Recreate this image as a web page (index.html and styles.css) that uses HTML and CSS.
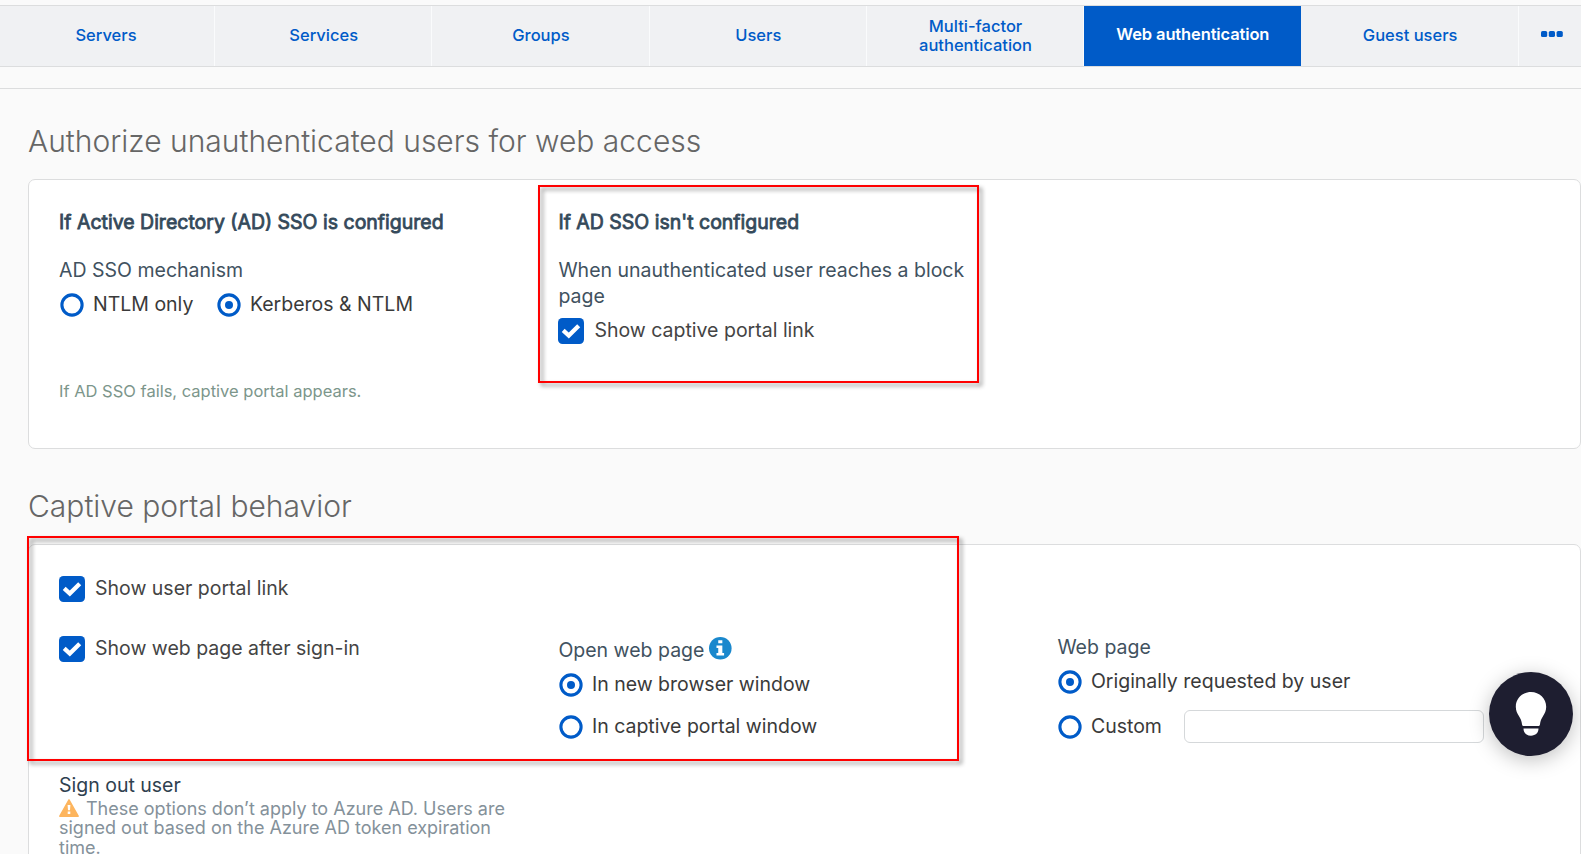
FILE: index.html
```html
<!DOCTYPE html>
<html lang="en">
<head>
<meta charset="utf-8">
<title>Web authentication</title>
<link rel="stylesheet" href="styles.css">
</head>
<body>
<svg class="sprite" aria-hidden="true">
  <symbol id="radio" viewBox="0 0 24 24"><circle cx="12" cy="12" r="10.1" fill="#fff" stroke="#005bc8" stroke-width="3.1"/></symbol>
  <symbol id="radio-on" viewBox="0 0 24 24"><circle cx="12" cy="12" r="10.1" fill="#fff" stroke="#005bc8" stroke-width="3.1"/><circle cx="12" cy="12" r="4" fill="#005bc8"/></symbol>
  <symbol id="check" viewBox="0 0 26 26"><rect width="26" height="26" rx="4.5" fill="#005bc8"/><path d="M5.2 12.4 10.8 17.5 20.7 7.7" fill="none" stroke="#fff" stroke-width="4.3"/></symbol>
</svg>
<nav class="tabs">
  <a class="tab">Servers</a>
  <a class="tab">Services</a>
  <a class="tab">Groups</a>
  <a class="tab">Users</a>
  <a class="tab">Multi-factor<br>authentication</a>
  <a class="tab tab-active">Web authentication</a>
  <a class="tab">Guest users</a>
  <a class="tab tab-more"><svg width="22" height="6" viewBox="0 0 22 6" fill="#005bc8"><rect width="6.2" height="6" rx="1.6"/><rect x="7.8" width="6.2" height="6" rx="1.6"/><rect x="15.6" width="6.2" height="6" rx="1.6"/></svg></a>
</nav>
<main class="content">
  <h1 class="title">Authorize unauthenticated users for web access</h1>
  <section class="card card-access">
    <div>
      <h2 class="subtitle">If Active Directory (AD) SSO is configured</h2>
      <p class="label">AD SSO mechanism</p>
      <div class="inline-options">
        <label class="option"><svg class="radio"><use href="#radio"/></svg>NTLM only</label>
        <label class="option"><svg class="radio"><use href="#radio-on"/></svg>Kerberos &amp; NTLM</label>
      </div>
      <p class="hint">If AD SSO fails, captive portal appears.</p>
    </div>
    <div>
      <h2 class="subtitle">If AD SSO isn't configured</h2>
      <p class="label label-wrap">When unauthenticated user reaches a block page</p>
      <label class="check-row"><svg class="check"><use href="#check"/></svg>Show captive portal link</label>
    </div>
  </section>
  <h1 class="title title-next">Captive portal behavior</h1>
  <section class="card card-portal">
    <label class="check-row"><svg class="check"><use href="#check"/></svg>Show user portal link</label>
    <div class="portal-row">
      <label class="check-row"><svg class="check"><use href="#check"/></svg>Show web page after sign-in</label>
      <div class="open-page">
        <p class="label">Open web page<svg class="info" viewBox="0 0 22 22"><circle cx="11" cy="11" r="11" fill="#1a88cd"/><path d="M9 3.2h4v3H9zM7.3 8.2H13v7.4h1.7V18H7.3v-2.4H9v-5H7.3z" fill="#fff"/></svg></p>
        <label class="option"><svg class="radio"><use href="#radio-on"/></svg>In new browser window</label>
        <label class="option"><svg class="radio"><use href="#radio"/></svg>In captive portal window</label>
      </div>
      <div class="web-page">
        <p class="label">Web page</p>
        <label class="option"><svg class="radio"><use href="#radio-on"/></svg>Originally requested by user</label>
        <div class="custom"><label class="option"><svg class="radio"><use href="#radio"/></svg>Custom</label><input class="field" type="text"></div>
      </div>
    </div>
    <div class="signout">
      <p class="label label-dark">Sign out user</p>
      <p class="note"><svg class="warn" viewBox="0 0 20 18"><path d="M10 .8 19.2 17.2H.8z" fill="#fdb55e" stroke="#fdb55e" stroke-width="1.4" stroke-linejoin="round"/><path d="M8.6 6h2.8l-.4 5.3H9zM8.7 12.6h2.6v2.5H8.7z" fill="#fff"/></svg>These options don’t apply to Azure AD. Users are<br>signed out based on the Azure AD token expiration<br>time.</p>
    </div>
  </section>
</main>
<div class="marker marker-access"></div>
<div class="marker marker-portal"></div>
<button class="help" aria-label="Help"><svg width="32" height="46" viewBox="0 0 32 46" fill="#fff"><path d="M16 1C7.500 1 .8 7.600.8 15.800c0 4.200 1.500 6.500 3.100 9.200 1.600 2.700 2.800 4.900 3.100 8.200.1 1.200.6 1.800 1.700 1.800h14.600c1.100 0 1.600-.6 1.700-1.800.3-3.300 1.500-5.500 3.100-8.200 1.600-2.700 3.100-5 3.100-9.200C31.200 7.600 24.500 1 16 1zM8.500 37.600h15c0 4.400-3 7.100-7.500 7.100s-7.500-2.700-7.500-7.100z"/></svg></button>
</body>
</html>
```
FILE: styles.css
```css
* { box-sizing: border-box; }
body { margin: 0; width: 1581px; height: 854px; overflow: hidden; position: relative; background: #fafafa; color: #3a3a3a; font: 400 19.5px/26px Inter, sans-serif; }
h1, h2, p { margin: 0; font-weight: 400; }
svg { flex: none; display: block; }
.sprite { position: absolute; width: 0; height: 0; }
.tabs { display: grid; grid-template-columns: 218px repeat(6, 217.3px) 1fr; height: 62px; margin: 5px 0 0 -3px; border: solid #dcddde; border-width: 1px 0; background: #f0f1f3; }
.tab { display: flex; align-items: center; justify-content: center; padding: 0 0 1px 1px; border-right: 1px solid #fafbfc; color: #005bc8; font-size: 16.5px; line-height: 19px; font-weight: 500; text-align: center; }
.tab-active { padding-bottom: 3px; background: #005bc8; color: #fff; font-weight: 600; letter-spacing: -.13px; border-color: #005bc8; }
.tab-more { border: 0; padding: 0 0 4px 4px; }
.content { height: 766px; overflow: hidden; margin-top: 21px; border-top: 1px solid #dcddde; padding: 34px 0 0 28px; }
.title { font-size: 30px; line-height: 36px; font-weight: 300; color: #666; margin-bottom: 20px; }
.title-next { margin-top: 39px; }
.card { width: 1553px; background: #fff; border: 1px solid #dcddde; border-radius: 7px; padding: 29px 0 0 30px; }
.card-access { height: 270px; display: grid; grid-template-columns: 499.4px 420px; }
.card-portal { height: 400px; padding-top: 30px; }
.subtitle { font-size: 19.5px; line-height: 26px; color: #34495a; -webkit-text-stroke: .8px #34495a; margin-bottom: 22px; }
.label { color: #41525f; display: flex; }
.label-dark { color: #2f414f; }
.inline-options { display: flex; gap: 22.5px; margin-top: 8px; }
.option { display: flex; gap: 9px; }
.radio { width: 24px; height: 24px; margin: 2px 0 0 1px; }
.hint { margin-top: 64px; font-size: 16.5px; line-height: 20px; color: #7c968b; }
.check-row { display: flex; gap: 10px; color: #444; }
.check { width: 26px; height: 26px; margin-top: 1px; }
.label-wrap + .check-row { margin-top: 8px; }
.portal-row { display: grid; grid-template-columns: 499.4px 499px 1fr; margin-top: 33px; height: 137px; }
.open-page { padding-top: 2px; }
.open-page .option, .web-page .option { gap: 8.5px; }
.web-page { margin-top: -1px; }
.info { width: 22.6px; height: 22.6px; margin-left: 4.5px; }
.open-page .label + .option { margin: 8px 0 16px; }
.web-page .label + .option { margin: 8px 0 16px; }
.custom { display: flex; }
.custom .option { margin-top: 3px; width: 126.6px; }
.field { width: 300px; height: 33px; border: 1px solid #d5d8da; border-radius: 6px; background: #fff; }
.note { font-size: 18px; line-height: 19.3px; color: #84919a; margin-top: 1px; }
.warn { display: inline-block; width: 20px; height: 18px; margin-right: 7px; vertical-align: -2px; }
.marker { position: absolute; border: 2px solid #f00; filter: drop-shadow(3px 3px 2px rgba(0, 0, 0, .45)); pointer-events: none; }
.marker-access { left: 538px; top: 185px; width: 441px; height: 198px; }
.marker-portal { left: 27px; top: 536px; width: 932px; height: 225px; }
.help { position: absolute; left: 1489px; top: 672px; width: 84px; height: 84px; padding: 0; border: 0; border-radius: 50%; background: #1e1e30; display: flex; align-items: center; justify-content: center; box-shadow: 0 4px 20px rgba(0, 0, 0, .25); }
```
